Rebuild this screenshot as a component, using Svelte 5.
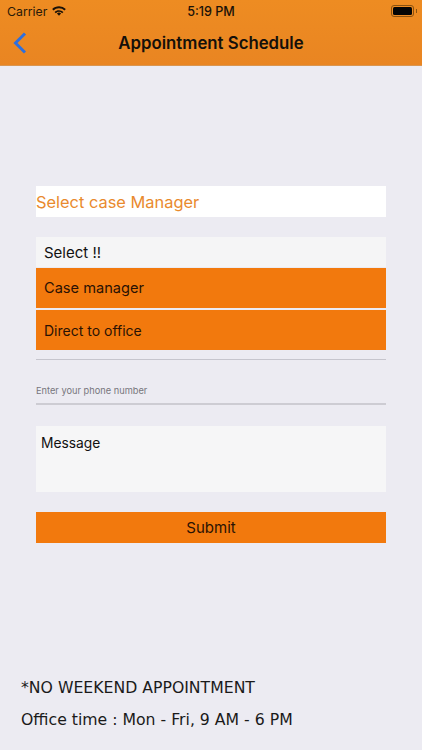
<script>
	let options = ['Case manager', 'Direct to office'];
	let phone = '';
</script>

<main class="page">
	<header class="top">
		<div class="status">
			<div class="status-left">
				<span class="carrier">Carrier</span>
				<svg class="wifi" width="14" height="10" viewBox="0 0 15 11">
					<path d="M7.5 10.8 5.2 8.3a3.3 3.3 0 0 1 4.6 0z" fill="#1a1208" />
					<path d="M7.5 4.6c-1.9 0-3.6.7-4.9 1.9l1.4 1.4a5.2 5.2 0 0 1 7 0l1.4-1.4a7.2 7.2 0 0 0-4.9-1.9z" fill="#1a1208" />
					<path d="M7.5.4C4.6.4 2 1.5 0 3.4l1.4 1.5a8.6 8.6 0 0 1 12.2 0L15 3.4A10.6 10.6 0 0 0 7.5.4z" fill="#1a1208" />
				</svg>
			</div>
			<span class="clock">5:19 PM</span>
			<div class="battery"><div class="battery-fill"></div></div>
		</div>
		<div class="nav">
			<svg class="back" width="14" height="22" viewBox="0 0 14 22">
				<path d="M12 1.500 2.500 11l9.500 9.500" fill="none" stroke="#2f6fdc" stroke-width="3" />
			</svg>
			<h1>Appointment Schedule</h1>
		</div>
	</header>

	<section class="form">
		<div class="picker-title">Select case Manager</div>

		<div class="dropdown">
			<div class="dropdown-head">Select !!</div>
			{#each options as option}
				<div class="option">{option}</div>
			{/each}
		</div>
		<div class="rule"></div>

		<input class="phone" type="text" placeholder="Enter your phone number" bind:value={phone} />

		<div class="message">Message</div>

		<button class="submit">Submit</button>
	</section>

	<footer class="notes">
		<p>*NO WEEKEND APPOINTMENT</p>
		<p>Office time : Mon - Fri, 9 AM - 6 PM</p>
	</footer>
</main>

<style>
	:global(body) {
		margin: 0;
		background: #ecebf2;
	}

	.page {
		height: 750px;
		display: flex;
		flex-direction: column;
		background: #ecebf2;
		font-family: Inter, 'Liberation Sans', sans-serif;
		color: #111;
		overflow: hidden;
	}

	.top {
		height: 66px;
		flex: none;
		box-sizing: border-box;
		background: linear-gradient(#ee8c22, #e98522);
		border-bottom: 1px solid #d99550;
	}

	.status {
		height: 22px;
		display: grid;
		grid-template-columns: 1fr auto 1fr;
		align-items: center;
		padding: 0 7px;
		font-size: 12.300px;
		color: #2a1a08;
	}

	.status-left {
		display: flex;
		align-items: center;
		gap: 5px;
	}

	.clock {
		font-weight: 500;
		font-size: 12.600px;
		color: #1a1208;
	}

	.battery {
		justify-self: end;
		position: relative;
		width: 19px;
		height: 8px;
		padding: 1px;
		border: 1px solid #8a5210;
		border-radius: 3px;
		box-sizing: content-box;
		margin-right: 1px;
	}

	.battery::after {
		content: '';
		position: absolute;
		right: -4px;
		top: 3px;
		width: 1.500px;
		height: 4px;
		background: #8a5210;
	}

	.battery-fill {
		height: 100%;
		background: #050505;
		border-radius: 1.500px;
	}

	.nav {
		height: 43px;
		position: relative;
		display: flex;
		align-items: center;
		justify-content: center;
		padding-bottom: 1px;
		box-sizing: border-box;
	}

	.back {
		position: absolute;
		left: 13px;
		top: 10px;
	}

	h1 {
		margin: 0;
		font-size: 16.800px;
		font-weight: 600;
		color: #14100a;
	}

	.form {
		margin: 120px 36px 0;
		display: flex;
		flex-direction: column;
	}

	.picker-title {
		height: 31px;
		background: #fff;
		color: #e98a2e;
		font-size: 16.400px;
		line-height: 33px;
	}

	.dropdown {
		margin-top: 20px;
	}

	.dropdown-head {
		height: 30px;
		line-height: 32px;
		padding-left: 8px;
		background: #f5f5f6;
		font-size: 15px;
	}

	.option {
		height: 40px;
		line-height: 41px;
		margin-top: 1px;
		padding-left: 8px;
		background: #f2790d;
		color: #2a1204;
		font-size: 14.600px;
	}

	.option + .option {
		margin-top: 2px;
		font-size: 14px;
		line-height: 41px;
	}

	.rule {
		height: 1px;
		margin-top: 9px;
		background: #c6c5cd;
	}

	.phone {
		height: 45px;
		margin: 0;
		padding: 18px 0 0;
		border: none;
		border-bottom: 2px solid #cdccd3;
		background: transparent;
		box-sizing: border-box;
		font-family: inherit;
		font-size: 9.250px;
		outline: none;
	}

	.phone::placeholder {
		color: #77767c;
		opacity: 1;
	}

	.message {
		height: 66px;
		margin-top: 21px;
		padding: 8px 5px;
		box-sizing: border-box;
		background: #f6f6f7;
		font-size: 13.800px;
		line-height: 18px;
	}

	.submit {
		height: 31px;
		margin-top: 20px;
		padding: 0;
		border: none;
		background: #f2790d;
		color: #2a1204;
		font-family: inherit;
		font-size: 15px;
	}

	.notes {
		margin-top: auto;
		padding: 0 21px 14px;
		font-family: 'DejaVu Sans', sans-serif;
		font-size: 15.700px;
		color: #1a1a1a;
	}

	.notes p {
		margin: 0;
		line-height: 32px;
	}
</style>
